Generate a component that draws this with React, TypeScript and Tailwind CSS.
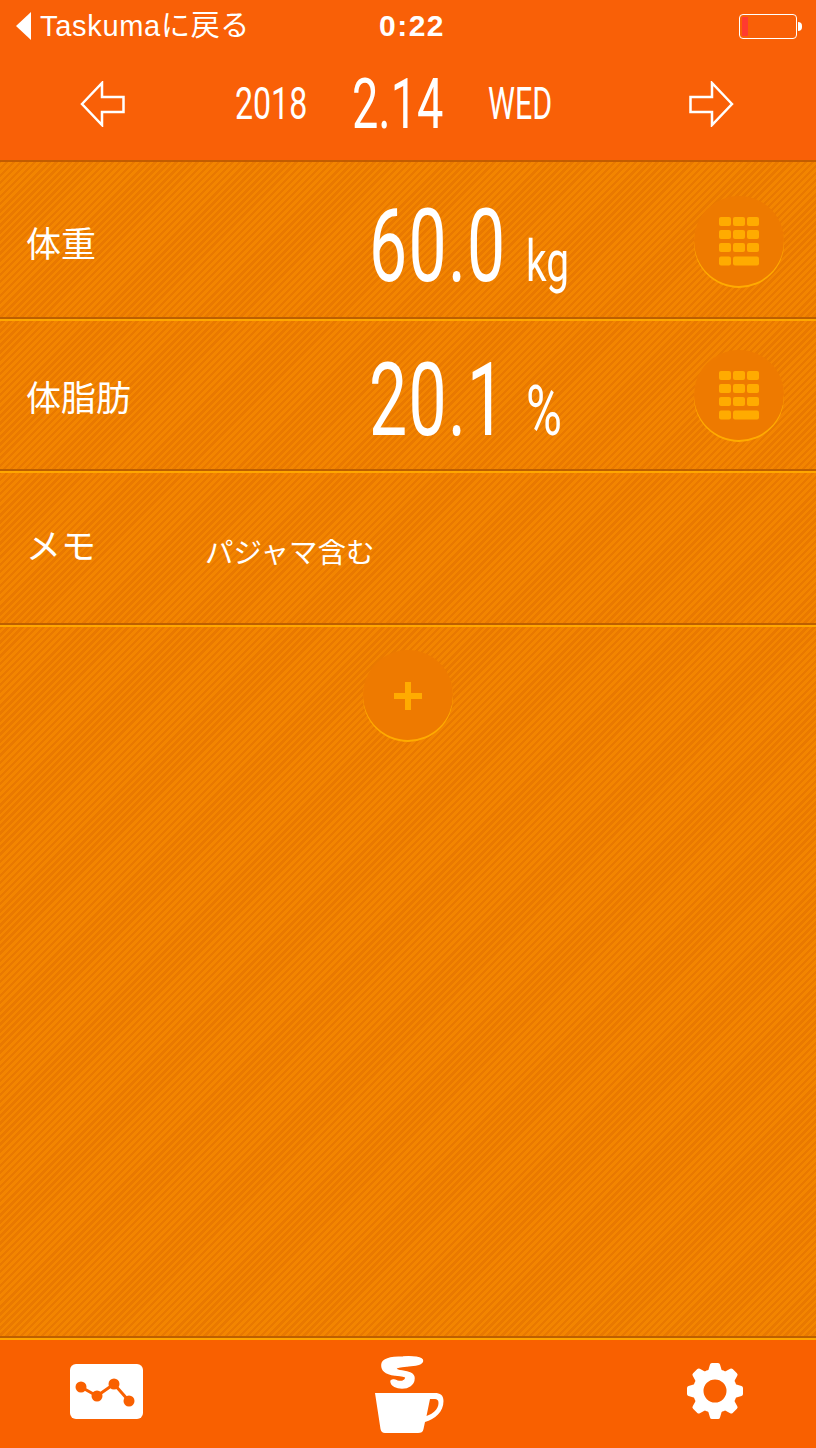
import React from 'react'

const sans = "font-['Liberation_Sans','Noto_Sans_CJK_JP',sans-serif]"
const din = "font-['Roboto','Liberation_Sans',sans-serif]"

const Keypad = () => (
  <svg width="42" height="50" viewBox="0 0 42 50" fill="#ffab00" className="mt-[2px] ml-[2px]">
    {[0, 13, 26].map((y) =>
      [0, 14, 28].map((x) => <rect key={`${x}-${y}`} x={x} y={y} width="12" height="9" rx="2" />),
    )}
    <rect x="0" y="39.500" width="12" height="9" rx="2" />
    <rect x="14" y="39.500" width="26" height="9" rx="2" />
  </svg>
)

const RoundButton = ({ children }: { children: React.ReactNode }) => (
  <div className="flex h-[90px] w-[90px] items-center justify-center rounded-full bg-[#ee7a00] shadow-[0_2px_0_#ffab00]">
    {children}
  </div>
)

const Divider = () => (
  <div className="h-[4px] shrink-0">
    <div className="h-[2px] bg-[#bd5f00]" />
    <div className="h-[2px] bg-[#ffa600]" />
  </div>
)

const Row = ({ label, value, unit, unitClass }: { label: string; value: string; unit: string; unitClass: string }) => (
  <div className="flex h-[148px] items-center pr-[32px] pl-[26px]">
    <div className="w-[240px] pt-[7px] text-[35px] leading-none text-white">{label}</div>
    <div className={`${din} flex items-baseline pt-[10px] pl-[103px] text-white`}>
      <span className="inline-block w-[157px] origin-left scale-x-[0.665] text-[102px] leading-none tracking-[2px] whitespace-nowrap">
        {value}
      </span>
      <span className={`inline-block origin-left leading-none ${unitClass}`}>{unit}</span>
    </div>
    <div className="ml-auto">
      <RoundButton>
        <Keypad />
      </RoundButton>
    </div>
  </div>
)

const ArrowIcon = ({ flip }: { flip?: boolean }) => (
  <svg width="46" height="46" viewBox="0 0 46 46" className={flip ? 'scale-x-[-1]' : ''}>
    <path d="M2 23 L22 2 V16 H43.500 V31 H22 V44 Z" fill="none" stroke="#fff" strokeWidth="2.500" />
  </svg>
)

const ChartIcon = () => (
  <svg width="74" height="56" viewBox="0 0 74 56" className="mt-[24px]">
    <rect width="73" height="55" rx="6" fill="#fff" />
    <path d="M11 23 L27 32 L44 20 L59 37" fill="none" stroke="#f96000" strokeWidth="3" />
    <circle cx="11" cy="23" r="5.500" fill="#f96000" />
    <circle cx="27" cy="32" r="5.500" fill="#f96000" />
    <circle cx="44" cy="20" r="5.500" fill="#f96000" />
    <circle cx="59" cy="37" r="5.500" fill="#f96000" />
  </svg>
)

const CupIcon = () => (
  <svg width="76" height="80" viewBox="0 0 76 80" fill="#fff" className="mt-[15px] mr-[15px]">
    <path
      d="M5 38 H65 C70 38 73.500 40 73.500 46 C73.500 57 65 64 55 67 L53.500 74 C53 77 51 78 48 78 H15 C12.500 78 11 76.500 10.500 74 Z M60 44 L56.500 61 C63 59 68.500 54 68.500 48 C68.500 45 67 44 65 44 Z"
      fillRule="evenodd"
    />
    <path
      d="M12 9 C13 3 24 2 33 2 C42 1.500 53 2 52.500 6 C52 10 44 10 37 11 C32 11.500 26 12 26 14 C27 17 44 15 44 23 C44 30 38 33 32 33 C27 33 21 31 21 26 C23 24 25 25 27 26 C30 27 35 27 36 23 C36 21 30 20.500 25 20 C18 19 11 16 12 9 Z"
      stroke="#fff"
      strokeWidth="1.500"
    />
  </svg>
)

const GearIcon = () => {
  const teeth = [0, 45, 90, 135, 180, 225, 270, 315]
  return (
    <svg width="56" height="56" viewBox="0 0 56 56" className="mt-[23px]">
      <g fill="#fff">
        {teeth.map((a) => (
          <path
            key={a}
            d="M20.500 10 L23 1.500 Q23.300 0 25 0 H31 Q32.700 0 33 1.500 L35.500 10 Z"
            transform={`rotate(${a} 28 28)`}
          />
        ))}
      </g>
      <circle cx="28" cy="28" r="16.750" fill="none" stroke="#fff" strokeWidth="10.500" />
    </svg>
  )
}

export default function App() {
  return (
    <div className={`${sans} flex h-[1448px] w-[816px] flex-col overflow-hidden bg-[#f96007]`}>
      {/* header */}
      <header className="h-[160px] shrink-0 text-white">
        <div className="flex h-[52px] items-center justify-between pr-[14px] pl-[16px]">
          <div className="flex w-[300px] items-center">
            <span className="h-0 w-0 border-y-[14px] border-r-[15px] border-y-transparent border-r-white" />
            <span className="ml-[9px] text-[29px] leading-none tracking-[0.7px] whitespace-nowrap">Taskumaに戻る</span>
          </div>
          <div className="text-[30px] leading-none font-bold tracking-[1.5px]">0:22</div>
          <div className="flex w-[294px] items-center justify-end">
            <div className="h-[25px] w-[58px] rounded-[4px] border-[1.5px] border-white p-[2px]">
              <div className="h-full w-[6px] bg-[#ff3b30]" />
            </div>
            <div className="ml-[1px] h-[9px] w-[4px] rounded-r-full bg-white" />
          </div>
        </div>
        <div className={`${din} flex h-[104px] items-center pr-[82px] pl-[80px]`}>
          <ArrowIcon />
          <div className="ml-[109px] flex items-center">
            <span className="inline-block w-[72px] origin-left scale-x-[0.73] text-[44px] leading-none whitespace-nowrap">
              2018
            </span>
            <span className="ml-[45px] inline-block w-[91px] origin-left scale-x-[0.67] text-[70px] leading-none whitespace-nowrap">
              2.14
            </span>
            <span className="ml-[45px] inline-block w-[64px] origin-left scale-x-[0.69] text-[44px] leading-none whitespace-nowrap">
              WED
            </span>
          </div>
          <div className="ml-auto">
            <ArrowIcon flip />
          </div>
        </div>
      </header>

      {/* list */}
      <main className="flex grow flex-col bg-[repeating-linear-gradient(135deg,#e97900_0px,#e97900_2.500px,#f38500_2.500px,#f38500_5px)]">
        <div className="h-[2px] bg-[#c25c00]" />
        <div className="h-[155px] pt-[5px]">
          <Row label="体重" value="60.0" unit="kg" unitClass="scale-x-[0.7] text-[58px]" />
        </div>
        <Divider />
        <Row label="体脂肪" value="20.1" unit="%" unitClass="scale-x-[0.7] text-[70px]" />
        <Divider />
        <div className="flex h-[150px] items-center pl-[26px]">
          <div className="w-[179px] pb-[4px] text-[35px] leading-none text-white">メモ</div>
          <div className="pt-[10px] text-[28.500px] leading-none text-white">パジャマ含む</div>
        </div>
        <Divider />
        <div className="flex grow justify-center pt-[23px]">
          <RoundButton>
            <span className="relative mt-[2px] block h-[28px] w-[28px]">
              <span className="absolute top-[11px] left-0 h-[6px] w-[28px] bg-[#ffab00]" />
              <span className="absolute top-0 left-[11px] h-[28px] w-[6px] bg-[#ffab00]" />
            </span>
          </RoundButton>
        </div>
        <Divider />
      </main>

      {/* tab bar */}
      <nav className="flex h-[108px] shrink-0 items-start justify-between bg-[#f96000] pr-[73px] pl-[70px]">
        <ChartIcon />
        <CupIcon />
        <GearIcon />
      </nav>
    </div>
  )
}
